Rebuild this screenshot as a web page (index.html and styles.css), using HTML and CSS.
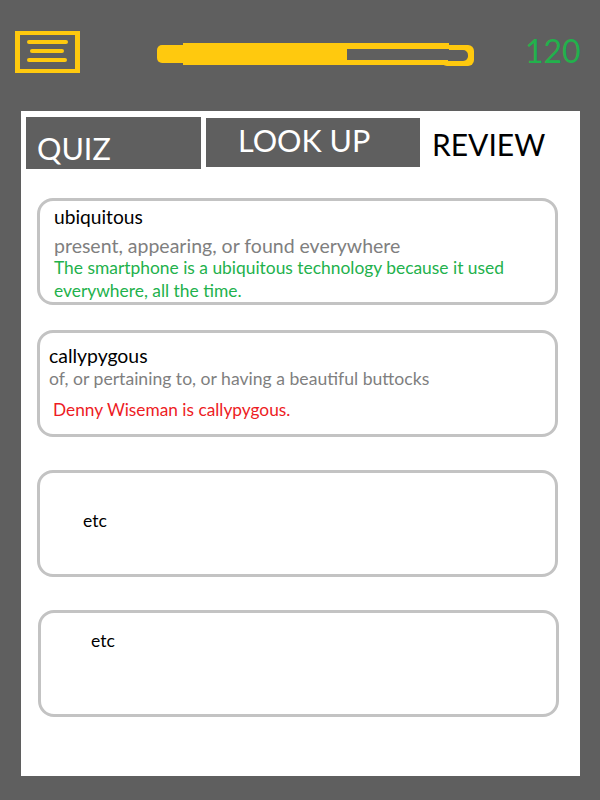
FILE: index.html
```html
<!DOCTYPE html>
<html>
<head>
<meta charset="utf-8">
<link rel="stylesheet" href="styles.css">
</head>
<body>
<div class="header">
  <svg class="menu" width="65" height="42" viewBox="0 0 65 42">
    <rect x="0" y="0" width="65" height="42" fill="#ffc90e"/>
    <rect x="5" y="4" width="55" height="34" fill="#5f5f5f"/>
    <g stroke="#ffc90e" stroke-width="4" stroke-linecap="round">
      <line x1="14" y1="11" x2="51" y2="11"/>
      <line x1="17" y1="20" x2="47" y2="20"/>
      <line x1="14" y1="29" x2="50" y2="29"/>
    </g>
  </svg>
  <svg class="progress" width="317" height="23" viewBox="0 0 317 23">
    <g fill="#ffc90e">
      <rect x="0" y="2" width="32" height="18" rx="5"/>
      <rect x="26" y="0" width="266" height="22"/>
      <rect x="284" y="2" width="33" height="21" rx="6"/>
    </g>
    <g fill="#5f5f5f">
      <rect x="190" y="6" width="102" height="11"/>
      <path d="M291 7 H306 a5 5 0 0 1 5 5 a5 5 0 0 1 -5 6 H291 Z"/>
    </g>
  </svg>
  <div class="score">120</div>
</div>
<div class="panel">
  <div class="tabs">
    <div class="tab tab-quiz">QUIZ</div>
    <div class="tab tab-lookup">LOOK UP</div>
    <div class="tab-review">REVIEW</div>
  </div>
  <div class="card card-1">
    <div class="word word-1">ubiquitous</div>
    <div class="def def-1">present, appearing, or found everywhere</div>
    <div class="example ex-green">The smartphone is a ubiquitous technology because it used everywhere, all the time.</div>
  </div>
  <div class="card card-2">
    <div class="word word-2">callypygous</div>
    <div class="def def-2">of, or pertaining to, or having a beautiful buttocks</div>
    <div class="example ex-red">Denny Wiseman is callypygous.</div>
  </div>
  <div class="card card-3">
    <div class="etc etc-1">etc</div>
  </div>
  <div class="card card-4">
    <div class="etc etc-2">etc</div>
  </div>
</div>
</body>
</html>
```
FILE: styles.css
```css
html, body {
  margin: 0;
  padding: 0;
  background: #5f5f5f;
  font-family: "Lato", "Open Sans", sans-serif;
}
.header {
  height: 111px;
  display: flex;
  align-items: flex-start;
}
.menu {
  display: block;
  margin-top: 31px;
  margin-left: 15px;
}
.progress {
  display: block;
  margin-top: 43px;
  margin-left: 77px;
}
.score {
  margin-left: 51px;
  margin-top: 31px;
  font-size: 32px;
  line-height: 40px;
  color: #22b14c;
}
.panel {
  margin-left: 21px;
  width: 559px;
  height: 665px;
  background: #fff;
  box-sizing: border-box;
  padding-top: 6px;
}
.tabs {
  display: flex;
  align-items: flex-start;
  margin-left: 5px;
  height: 81px;
}
.tab {
  background: #5f5f5f;
  color: #fff;
  font-size: 30.5px;
  box-sizing: border-box;
}
.tab-quiz {
  width: 175px;
  height: 52px;
  padding-left: 11px;
  padding-top: 11px;
  line-height: 40px;
}
.tab-lookup {
  width: 214px;
  height: 49px;
  margin-left: 5px;
  margin-top: 1px;
  padding-left: 32px;
  padding-top: 2px;
  line-height: 40px;
}
.tab-review {
  margin-left: 12px;
  padding-top: 7px;
  font-size: 30px;
  line-height: 40px;
  color: #000;
}
.card {
  margin-left: 16px;
  width: 521px;
  height: 107px;
  border: 3px solid #c3c3c3;
  border-radius: 16px;
  box-sizing: border-box;
}
.card-2 { margin-top: 25px; }
.card-3 { margin-top: 33px; }
.card-4 { margin-top: 33px; margin-left: 17px; }
.word {
  color: #000;
  line-height: 22px;
}
.word-1 { font-size: 19.2px; }
.word-2 { font-size: 19.4px; }
.def {
  color: #7f7f7f;
}
.def-1 { font-size: 19.5px; line-height: 24px; margin-top: 6px; }
.def-2 { font-size: 17.6px; line-height: 22px; margin-top: 1px; }
.example {
  line-height: 23px;
}
.card-1 { padding: 5px 10px 0 14px; }
.card-1 .example { margin-top: -2px; font-size: 17.4px; }
.card-2 { padding: 12px 10px 0 9px; }
.card-2 .example { margin-top: 8px; padding-left: 4px; font-size: 17.3px; }
.ex-green { color: #22b14c; }
.ex-red { color: #ed1c24; }
.etc {
  font-size: 17.5px;
  line-height: 22px;
  color: #000;
}
.etc-1 { padding: 37px 0 0 43px; }
.etc-2 { padding: 17px 0 0 50px; }
```
